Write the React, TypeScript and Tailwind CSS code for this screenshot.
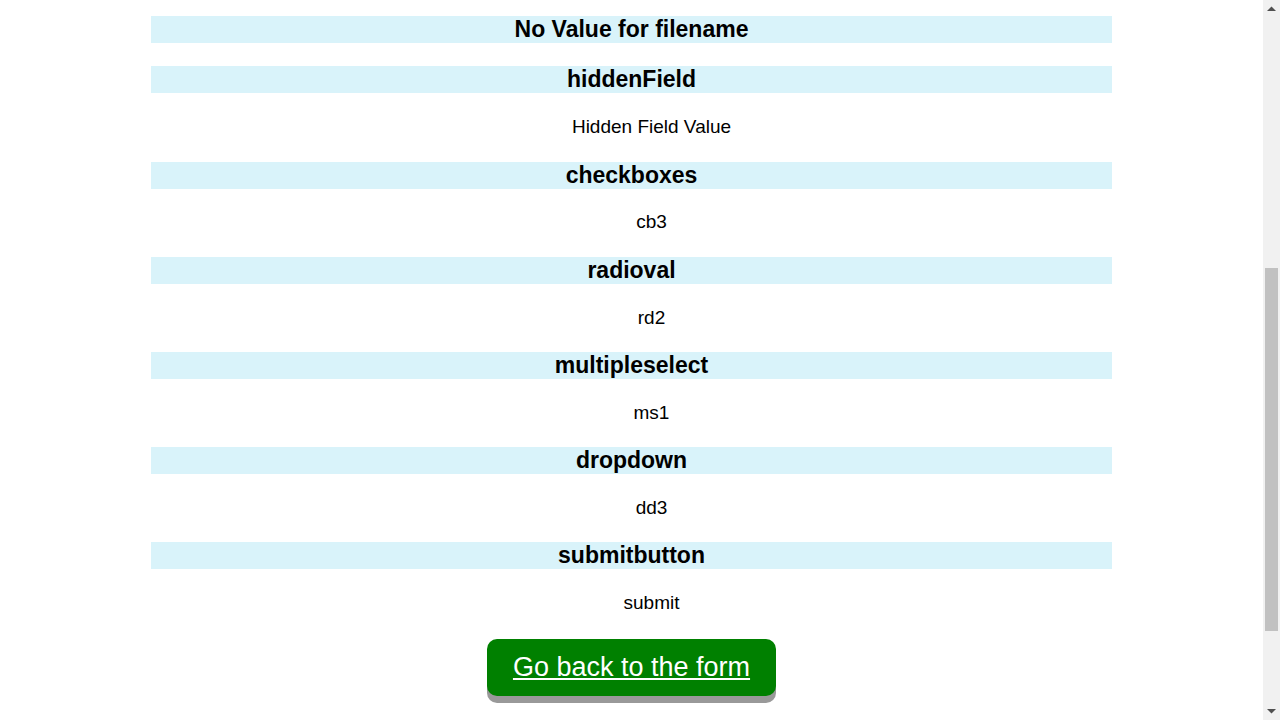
import React from "react";

const rows: { name: string; value?: string }[] = [
  { name: "No Value for filename" },
  { name: "hiddenField", value: "Hidden Field Value" },
  { name: "checkboxes", value: "cb3" },
  { name: "radioval", value: "rd2" },
  { name: "multipleselect", value: "ms1" },
  { name: "dropdown", value: "dd3" },
  { name: "submitbutton", value: "submit" },
];

export default function App() {
  return (
    <div
      className="flex h-screen w-full overflow-hidden bg-white text-black"
      style={{ fontFamily: '"Liberation Sans", Arial, sans-serif' }}
    >
      <main className="flex flex-1 flex-col items-center pt-[16px]">
        <div className="flex w-[961px] flex-col">
          {rows.map((r) => (
            <div key={r.name} className="flex flex-col">
              <h2 className="h-[27px] bg-[#d9f3fa] text-center text-[23px] font-bold leading-[27px]">
                {r.name}
              </h2>
              {r.value ? (
                <p className="ml-[40px] pt-[21.8px] pb-[23.4px] text-center text-[19px] leading-[23px]">
                  {r.value}
                </p>
              ) : (
                <div className="h-[23.4px]" />
              )}
            </div>
          ))}
        </div>
        <a
          href="#"
          className="mt-[1px] rounded-[10px] bg-[#008000] px-[26px] py-[13px] text-[27px] leading-[31px] text-white underline shadow-[0_7px_0_#999999]"
        >
          Go back to the form
        </a>
      </main>
      <div className="flex w-[17px] flex-col items-center bg-[#f1f1f1]">
        <div className="flex h-[17px] w-full items-center justify-center">
          <svg width="9" height="5" viewBox="0 0 9 5">
            <path d="M0 5 L4.5 0.5 L9 5 Z" fill="#505050" />
          </svg>
        </div>
        <div className="h-[251px]" />
        <div className="h-[363px] w-[13px] bg-[#c1c1c1]" />
        <div className="flex-1" />
        <div className="flex h-[17px] w-full items-center justify-center">
          <svg width="9" height="5" viewBox="0 0 9 5">
            <path d="M0 0 L4.5 4.5 L9 0 Z" fill="#505050" />
          </svg>
        </div>
      </div>
    </div>
  );
}
